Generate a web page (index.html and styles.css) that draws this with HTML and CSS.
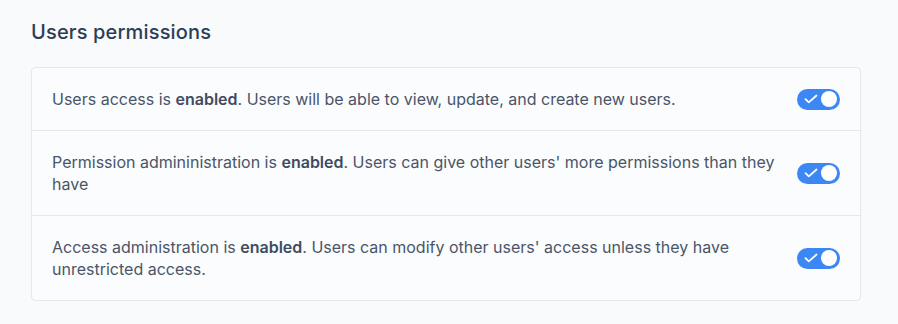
FILE: index.html
```html
<!DOCTYPE html>
<html lang="en">
<head>
    <meta charset="UTF-8">
    <meta name="viewport" content="width=device-width, initial-scale=1.0">
    <title>Users permissions</title>
    <link rel="stylesheet" href="styles.css">
</head>
<body>
    <div class="container">
        <h2>Users permissions</h2>
        <div class="card">
            <div class="row">
                <p>Users access is <b>enabled</b>. Users will be able to view, update, and create new users.</p>
                <span class="toggle">
                    <svg width="14" height="10" viewBox="0 0 14 10"><path d="M1.5 5.2l3.3 3.1L12.5 1.5" fill="none" stroke="#fff" stroke-width="1.8" stroke-linecap="round" stroke-linejoin="round"/></svg>
                    <span class="knob"></span>
                </span>
            </div>
            <div class="row">
                <p>Permission admininistration is <b>enabled</b>. Users can give other users' more permissions than they have</p>
                <span class="toggle">
                    <svg width="14" height="10" viewBox="0 0 14 10"><path d="M1.5 5.2l3.3 3.1L12.5 1.5" fill="none" stroke="#fff" stroke-width="1.8" stroke-linecap="round" stroke-linejoin="round"/></svg>
                    <span class="knob"></span>
                </span>
            </div>
            <div class="row">
                <p>Access administration is <b>enabled</b>. Users can modify other users' access unless they have unrestricted access.</p>
                <span class="toggle">
                    <svg width="14" height="10" viewBox="0 0 14 10"><path d="M1.5 5.2l3.3 3.1L12.5 1.5" fill="none" stroke="#fff" stroke-width="1.8" stroke-linecap="round" stroke-linejoin="round"/></svg>
                    <span class="knob"></span>
                </span>
            </div>
        </div>
    </div>
</body>
</html>
```

FILE: styles.css
```css
body {
    margin: 0;
    background-color: #f9fafc;
    font-family: Inter, "Noto Sans", sans-serif;
    color: #4a5568;
}

.container {
    width: 830px;
    padding: 18px 31px;
}

h2 {
    margin: 0 0 21px;
    font-size: 20px;
    font-weight: 500;
    line-height: 28px;
    letter-spacing: 0.15px;
    color: #2c3e56;
}

.card {
    background-color: #fbfcfd;
    border: 1px solid #e5e7eb;
    border-radius: 4px;
}

.row {
    display: flex;
    align-items: center;
    gap: 20px;
    padding: 20px 20px;
    border-bottom: 1px solid #e5e7eb;
}

.row:last-child {
    border-bottom: none;
}

.row p {
    flex: 1;
    margin: 0;
    font-size: 16px;
    line-height: 22px;
}

.row b {
    font-weight: 600;
    color: #3f4b5e;
}

.toggle {
    flex: none;
    display: flex;
    align-items: center;
    justify-content: space-between;
    width: 43px;
    height: 21px;
    padding: 0 3px 0 7px;
    box-sizing: border-box;
    border-radius: 11px;
    background-color: #3d87f5;
}

.toggle svg {
    display: block;
}

.knob {
    width: 16px;
    height: 16px;
    border-radius: 50%;
    background-color: #fff;
}
```
